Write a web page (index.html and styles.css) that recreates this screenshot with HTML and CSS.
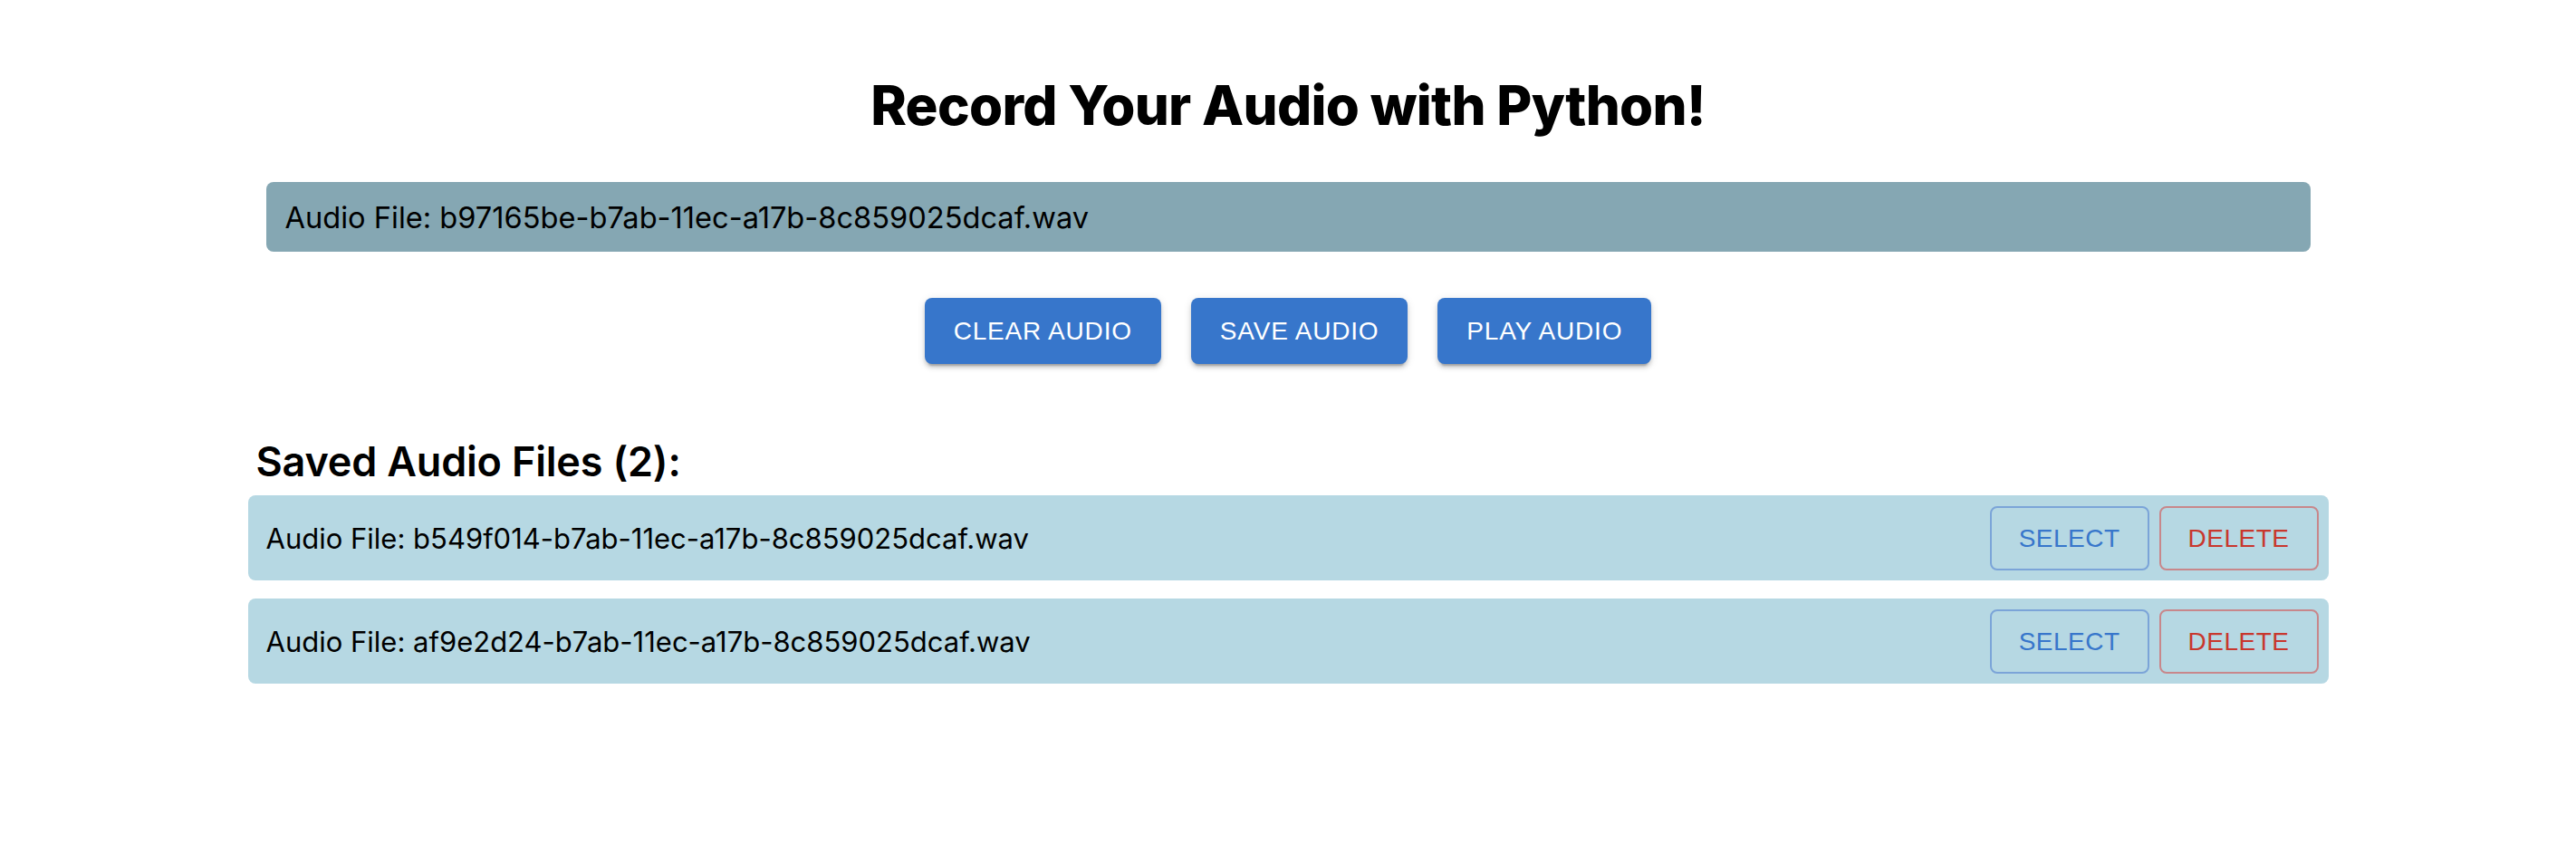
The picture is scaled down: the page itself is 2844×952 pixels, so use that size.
FILE: index.html
```html
<!DOCTYPE html>
<html lang="en">
<head>
<meta charset="utf-8">
<title>Record Your Audio with Python!</title>
<link rel="stylesheet" href="styles.css">
</head>
<body>
<main class="page">
  <h1 class="title">Record Your Audio with Python!</h1>
  <div class="current">Audio File: b97165be-b7ab-11ec-a17b-8c859025dcaf.wav</div>
  <div class="actions">
    <button class="btn-contained">CLEAR AUDIO</button>
    <button class="btn-contained">SAVE AUDIO</button>
    <button class="btn-contained">PLAY AUDIO</button>
  </div>
  <h2 class="saved-heading">Saved Audio Files (2):</h2>
  <ul class="saved-list">
    <li class="saved-item">
      <span class="saved-name">Audio File: b549f014-b7ab-11ec-a17b-8c859025dcaf.wav</span>
      <div class="item-actions">
        <button class="btn-outlined btn-select">SELECT</button>
        <button class="btn-outlined btn-delete">DELETE</button>
      </div>
    </li>
    <li class="saved-item">
      <span class="saved-name">Audio File: af9e2d24-b7ab-11ec-a17b-8c859025dcaf.wav</span>
      <div class="item-actions">
        <button class="btn-outlined btn-select">SELECT</button>
        <button class="btn-outlined btn-delete">DELETE</button>
      </div>
    </li>
  </ul>
</main>
</body>
</html>
```

FILE: styles.css
```css
html, body {
  margin: 0;
  padding: 0;
  background: #ffffff;
}

body {
  font-family: Inter, "Noto Sans", "Liberation Sans", sans-serif;
  color: #000000;
}

.page {
  width: 2297px;
  margin: 0 auto;
  display: flex;
  flex-direction: column;
  align-items: center;
}

.title {
  margin: 80px 0 0;
  font-size: 60px;
  line-height: 72px;
  font-weight: 800;
  letter-spacing: -0.7px;
}

.current {
  box-sizing: border-box;
  width: 2257px;
  margin-top: 49px;
  height: 77px;
  padding: 0 21px;
  display: flex;
  align-items: center;
  background: #85a7b3;
  border-radius: 8px;
  font-size: 32.6px;
  line-height: 48px;
}

.actions {
  display: flex;
  gap: 33px;
  margin-top: 51px;
}

.btn-contained {
  font-family: "Liberation Sans", Arial, sans-serif;
  font-size: 28px;
  line-height: 49px;
  letter-spacing: 0.8px;
  padding: 12px 32px;
  border: none;
  border-radius: 8px;
  background: #3776cb;
  color: #ffffff;
  box-shadow: 0 6px 2px -4px rgba(0,0,0,0.2), 0 4px 4px 0 rgba(0,0,0,0.14), 0 2px 10px 0 rgba(0,0,0,0.12);
}

.saved-heading {
  align-self: flex-start;
  margin: 80px 0 0 9px;
  font-size: 45px;
  line-height: 56px;
  font-weight: 600;
  letter-spacing: -0.2px;
}

.saved-list {
  list-style: none;
  margin: 9px 0 0;
  padding: 0;
  width: 100%;
  display: flex;
  flex-direction: column;
  gap: 20px;
}

.saved-item {
  display: flex;
  align-items: center;
  justify-content: space-between;
  padding: 12px 11px 11px 20px;
  background: #b6d8e3;
  border-radius: 8px;
}

.saved-name {
  font-size: 31px;
  line-height: 48px;
}

.item-actions {
  display: flex;
  gap: 11px;
}

.btn-outlined {
  font-family: "Liberation Sans", Arial, sans-serif;
  font-size: 28px;
  line-height: 49px;
  letter-spacing: 0.5px;
  padding: 9px 30px;
  background: transparent;
  border-radius: 8px;
  border: 2px solid;
}

.btn-select {
  color: #3776cb;
  border-color: #7ba4d8;
}

.btn-delete {
  color: #c8372d;
  border-color: #c8878b;
}
```
